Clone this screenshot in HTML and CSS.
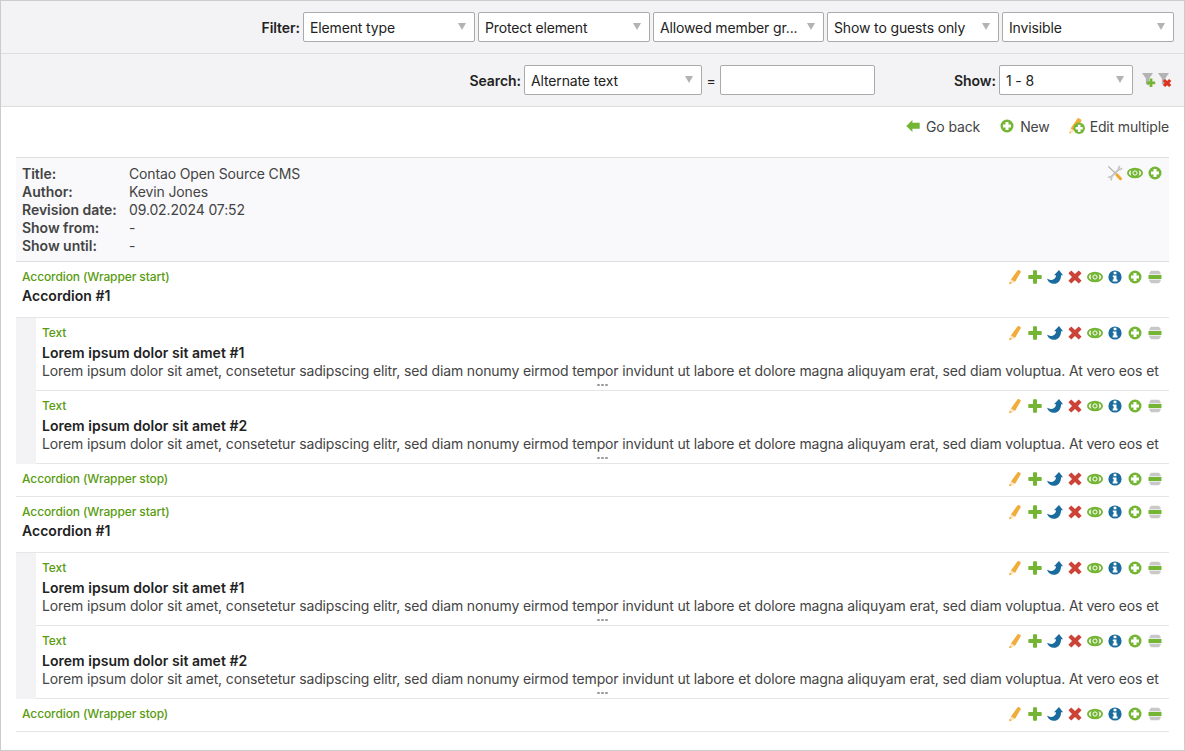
FILE: index.html
```
<!DOCTYPE html>
<html lang="en">
<head>
<meta charset="utf-8">
<title>Content elements</title>
<link rel="stylesheet" href="styles.css">
</head>
<body>
<svg class="sprite" aria-hidden="true">
  <symbol id="edit" viewBox="0 0 16 16"><path fill="#f0ad3c" d="M10.400 1.400q.5-.8 1.400-.3l1.500.9q.8.500.3 1.400L8 12.900 3.900 10.500z"/><path fill="#fbe3bd" d="M3.800 10.700l4 2.400-4.400 2.100q-1.100.4-1-.7z"/><path fill="#f0ad3c" d="M2.500 12.700l2.200 1.500-1.500.9q-.9.200-.9-.8z"/></symbol>
  <symbol id="plus" viewBox="0 0 16 16"><path fill="#74b533" d="M6 2q0-.7.7-.7h2.600q.7 0 .7.7v4h4q.7 0 .7.7v2.600q0 .7-.7.7h-4v4q0 .7-.7.700H6.700Q6 14.700 6 14v-4H2q-.7 0-.7-.7V6.700Q1.300 6 2 6h4z"/></symbol>
  <symbol id="move" viewBox="0 0 16 16"><path fill="#1a6b9e" d="M12 1l4 5.200h-1.900c-.1 5-2.900 8.600-7.300 8.600C3.900 14.800 1.200 13 0 9.800c2 1.100 4 1.500 5.500.9 2.400-.9 3.500-2.400 3.500-4.500H7z"/></symbol>
  <symbol id="delete" viewBox="0 0 16 16"><path fill="#cb4437" d="M4.300 1.600L8 5l3.700-3.400 2.900 2.600L11 8l3.600 3.800-2.900 2.600L8 11l-3.700 3.400-2.900-2.600L5 8 1.400 4.200z"/></symbol>
  <symbol id="eye" viewBox="0 0 16 16"><ellipse cx="8" cy="8" rx="8" ry="5.200" fill="#74b533"/><path fill="#fff" d="M4.400 5Q-.8 8 4.400 11 2.800 8 4.400 5zM11.600 5Q16.800 8 11.600 11 13.200 8 11.600 5z"/><circle cx="8" cy="8" r="2.100" fill="none" stroke="#fff" stroke-width="1"/></symbol>
  <symbol id="info" viewBox="0 0 16 16"><circle cx="8" cy="8" r="6.600" fill="#1a6b9e"/><path fill="#fff" d="M6.600 2.800h2.800v2.400H6.600zM5.800 6.400h3.700v4.200h1v1.900H5.700v-1.900h.9V8.100h-.8z"/></symbol>
  <symbol id="new" viewBox="0 0 16 16"><circle cx="8" cy="8" r="6.500" fill="#74b533"/><path fill="#fff" d="M6.500 4h3v2.500H12v3H9.500V12h-3V9.500H4v-3h2.500z"/></symbol>
  <symbol id="drag" viewBox="0 0 16 16"><path fill="#c8c8c8" d="M4 1.700h8L13.700 4v8L12 14.300H4L2.300 12V4z"/><path fill="#fff" d="M1 5.400h14v5.200H1z"/><path fill="#74b533" d="M1.500 6h13v4h-13z"/></symbol>
  <symbol id="back" viewBox="0 0 16 16"><path fill="#74b533" d="M1.300 8L7.400 2v2.700h7.300v6H7.400V14z"/></symbol>
  <symbol id="multi" viewBox="0 0 16 16"><g transform="translate(-1.500 0)"><path fill="#f0ad3c" d="M10 .5q.5-.8 1.500-.2l2 1.200q.9.600.4 1.500L7.500 13.300 3 10.600z"/><path fill="#fbe3bd" d="M3 11l4.300 2.500-4.900 2.300q-.7.300-.6-.5z"/><path fill="#f0ad3c" d="M2 13.600l1.800 1.200-1.800.8z"/></g><circle cx="10.200" cy="10.300" r="5.700" fill="#74b533"/><path fill="#fff" d="M8.900 6.700h2.600V9h2.300v2.600h-2.300v2.300H8.900v-2.300H6.600V9h2.300z"/></symbol>
  <symbol id="tools" viewBox="0 0 16 16"><path stroke="#c5c5c5" stroke-width="1.900" fill="none" d="M3.300 12.700L12.500 3.700"/><path stroke="#c5c5c5" stroke-width="1.600" fill="none" d="M12.900.9L11.400 3.200l1.500 1.500 2.300-1.500M1 12.400l2.200-.8 1.500 1.500-.9 2.300"/><path stroke="#aaa" stroke-width="1.100" d="M1.300 1.300L8.500 8.400"/><path stroke="#f0a52e" stroke-width="3" stroke-linecap="round" d="M9.800 9.800l3.700 3.900"/></symbol>
  <symbol id="filter" viewBox="0 0 16 16"><path fill="#b3b3b3" d="M0 1h11L7.200 6.600v7L3.900 12V6.600z"/><path fill="#74b533" d="M7.600 6.600h2.800v2.800h2.800v2.800h-2.800V15H7.600v-2.800H4.800V9.400h2.800z"/></symbol>
  <symbol id="reset" viewBox="0 0 16 16"><path fill="#b3b3b3" d="M0 1h11L7.200 6.600v7L3.900 12V6.600z"/><path fill="#e0301e" d="M7.100 6.900l2 2 2-2 2.200 2.200-1.900 1.900 1.900 1.900-2.200 2.200-2-1.900-2 1.900-2.200-2.200 1.900-1.900-1.900-1.900z"/></symbol>
</svg>

<main class="main">
  <div class="panel">
    <strong class="label">Filter:</strong>
    <div class="select w172">Element type</div>
    <div class="select w172">Protect element</div>
    <div class="select w171">Allowed member gr...</div>
    <div class="select w172">Show to guests only</div>
    <div class="select w172">Invisible</div>
  </div>
  <div class="panel">
    <strong class="label">Search:</strong>
    <div class="select w178">Alternate text</div>
    <span class="equals">=</span>
    <input class="field" type="text" aria-label="Search value">
    <strong class="label show">Show:</strong>
    <div class="select w134">1 - 8</div>
    <div class="submit"><svg><use href="#filter"/></svg><svg><use href="#reset"/></svg></div>
  </div>

  <nav class="buttons">
    <a class="back"><svg><use href="#back"/></svg>Go back</a>
    <a class="add"><svg><use href="#new"/></svg>New</a>
    <a class="many"><svg><use href="#multi"/></svg>Edit multiple</a>
  </nav>

  <section class="listing">
    <header class="head">
      <dl class="meta">
        <dt>Title:</dt><dd>Contao Open Source CMS</dd>
        <dt>Author:</dt><dd>Kevin Jones</dd>
        <dt>Revision date:</dt><dd>09.02.2024 07:52</dd>
        <dt>Show from:</dt><dd>-</dd>
        <dt>Show until:</dt><dd>-</dd>
      </dl>
      <div class="icons"><svg><use href="#tools"/></svg><svg><use href="#eye"/></svg><svg><use href="#new"/></svg></div>
    </header>

    <article class="row start">
      <div class="bar"><span class="type">Accordion (Wrapper start)</span><div class="icons"><svg><use href="#edit"/></svg><svg><use href="#plus"/></svg><svg><use href="#move"/></svg><svg><use href="#delete"/></svg><svg><use href="#eye"/></svg><svg><use href="#info"/></svg><svg><use href="#new"/></svg><svg><use href="#drag"/></svg></div></div>
      <h2>Accordion #1</h2>
    </article>
    <div class="nested">
      <article class="row text">
        <div class="bar"><span class="type">Text</span><div class="icons"><svg><use href="#edit"/></svg><svg><use href="#plus"/></svg><svg><use href="#move"/></svg><svg><use href="#delete"/></svg><svg><use href="#eye"/></svg><svg><use href="#info"/></svg><svg><use href="#new"/></svg><svg><use href="#drag"/></svg></div></div>
        <h2>Lorem ipsum dolor sit amet #1</h2>
        <p>Lorem ipsum dolor sit amet, consetetur sadipscing elitr, sed diam nonumy eirmod tempor invidunt ut labore et dolore magna aliquyam erat, sed diam voluptua. At vero eos et</p>
        <div class="more"><i></i><i></i><i></i></div>
      </article>
      <article class="row text">
        <div class="bar"><span class="type">Text</span><div class="icons"><svg><use href="#edit"/></svg><svg><use href="#plus"/></svg><svg><use href="#move"/></svg><svg><use href="#delete"/></svg><svg><use href="#eye"/></svg><svg><use href="#info"/></svg><svg><use href="#new"/></svg><svg><use href="#drag"/></svg></div></div>
        <h2>Lorem ipsum dolor sit amet #2</h2>
        <p>Lorem ipsum dolor sit amet, consetetur sadipscing elitr, sed diam nonumy eirmod tempor invidunt ut labore et dolore magna aliquyam erat, sed diam voluptua. At vero eos et</p>
        <div class="more"><i></i><i></i><i></i></div>
      </article>
    </div>
    <article class="row stop">
      <div class="bar"><span class="type">Accordion (Wrapper stop)</span><div class="icons"><svg><use href="#edit"/></svg><svg><use href="#plus"/></svg><svg><use href="#move"/></svg><svg><use href="#delete"/></svg><svg><use href="#eye"/></svg><svg><use href="#info"/></svg><svg><use href="#new"/></svg><svg><use href="#drag"/></svg></div></div>
    </article>

    <article class="row start">
      <div class="bar"><span class="type">Accordion (Wrapper start)</span><div class="icons"><svg><use href="#edit"/></svg><svg><use href="#plus"/></svg><svg><use href="#move"/></svg><svg><use href="#delete"/></svg><svg><use href="#eye"/></svg><svg><use href="#info"/></svg><svg><use href="#new"/></svg><svg><use href="#drag"/></svg></div></div>
      <h2>Accordion #1</h2>
    </article>
    <div class="nested">
      <article class="row text">
        <div class="bar"><span class="type">Text</span><div class="icons"><svg><use href="#edit"/></svg><svg><use href="#plus"/></svg><svg><use href="#move"/></svg><svg><use href="#delete"/></svg><svg><use href="#eye"/></svg><svg><use href="#info"/></svg><svg><use href="#new"/></svg><svg><use href="#drag"/></svg></div></div>
        <h2>Lorem ipsum dolor sit amet #1</h2>
        <p>Lorem ipsum dolor sit amet, consetetur sadipscing elitr, sed diam nonumy eirmod tempor invidunt ut labore et dolore magna aliquyam erat, sed diam voluptua. At vero eos et</p>
        <div class="more"><i></i><i></i><i></i></div>
      </article>
      <article class="row text">
        <div class="bar"><span class="type">Text</span><div class="icons"><svg><use href="#edit"/></svg><svg><use href="#plus"/></svg><svg><use href="#move"/></svg><svg><use href="#delete"/></svg><svg><use href="#eye"/></svg><svg><use href="#info"/></svg><svg><use href="#new"/></svg><svg><use href="#drag"/></svg></div></div>
        <h2>Lorem ipsum dolor sit amet #2</h2>
        <p>Lorem ipsum dolor sit amet, consetetur sadipscing elitr, sed diam nonumy eirmod tempor invidunt ut labore et dolore magna aliquyam erat, sed diam voluptua. At vero eos et</p>
        <div class="more"><i></i><i></i><i></i></div>
      </article>
    </div>
    <article class="row stop">
      <div class="bar"><span class="type">Accordion (Wrapper stop)</span><div class="icons"><svg><use href="#edit"/></svg><svg><use href="#plus"/></svg><svg><use href="#move"/></svg><svg><use href="#delete"/></svg><svg><use href="#eye"/></svg><svg><use href="#info"/></svg><svg><use href="#new"/></svg><svg><use href="#drag"/></svg></div></div>
    </article>
  </section>
</main>
</body>
</html>
```
FILE: styles.css
```
* { box-sizing: border-box; }
body { margin: 0; font: 14px/18px Inter, "Liberation Sans", sans-serif; color: #444; background: #fff; letter-spacing: -.137px; }
.sprite { display: none; }
svg { display: block; width: 16px; height: 16px; flex: none; }
.main { width: 1185px; height: 751px; border: 1px solid #ccc; overflow: hidden; }

.panel { height: 53px; padding: 0 10px; border-bottom: 1px solid #ddd; background: #f3f3f5; display: flex; align-items: center; justify-content: flex-end; color: #222; }
.label { font-weight: 600; margin-right: 3px; padding-top: 2px; letter-spacing: -.05px; }
.select { height: 30px; padding: 1px 6px 0; border: 1px solid #aaa; border-radius: 2px; background: #fff; display: flex; align-items: center; justify-content: space-between; white-space: nowrap; }
.select + .select { margin-left: 3px; }
.select::after { content: ""; border: 4.5px solid transparent; border-top: 7px solid #b3b3b3; border-bottom: 0; margin: -3px 2px 0 0; }
.w171 { width: 171px; }
.w172 { width: 172px; }
.w178 { width: 178px; }
.w134 { width: 134px; }
.equals { width: 18px; padding-top: 2px; text-align: center; }
.field { width: 155px; height: 30px; border: 1px solid #aaa; border-radius: 2px; background: #fff; padding: 0 6px; }
.show { margin-left: 79px; }
.submit { display: flex; margin: -1px -1px 0 9px; width: 33px; }

.buttons { height: 50px; padding: 11px 15px 0; display: flex; justify-content: flex-end; }
.buttons a { display: flex; height: 18px; align-items: center; }
.buttons svg { margin: -2px 5px 0 0; }
.add { margin-left: 19px; }
.many { margin-left: 19px; }

.listing { margin: 0 15px; }
.head { height: 105px; padding: 7px 6px 0; border: solid #ddd; border-width: 1px 0; background: #f9f9fb; display: flex; justify-content: space-between; }
.meta { display: grid; grid-template-columns: 107px auto; margin: 0; height: 90px; }
.meta dt { font-weight: 600; letter-spacing: -.03px; }
.meta dd { margin: 0; }
.icons { display: flex; gap: 4px; height: 16px; }
.row { border-bottom: 1px solid #e6e6e8; padding: 7px 6px 0; }
.start { height: 56px; }
.stop { height: 33px; }
.text { height: 73px; }
.bar { display: flex; justify-content: space-between; height: 18px; }
.type { font-size: 12px; line-height: 16px; color: #589b0e; font-weight: 500; letter-spacing: -.1px; }
.row h2 { margin: 0; font-size: 14px; line-height: 18px; font-weight: 600; color: #222; letter-spacing: .03px; }
.text h2 { margin-top: 1px; }
.row p { margin: 0; white-space: nowrap; }
.nested { border-left: 20px solid #f3f3f5; }
.more { display: flex; justify-content: center; gap: 1px; margin-top: 4px; }
.more i { width: 3px; height: 2px; border-radius: 1px; background: #999; }
```
